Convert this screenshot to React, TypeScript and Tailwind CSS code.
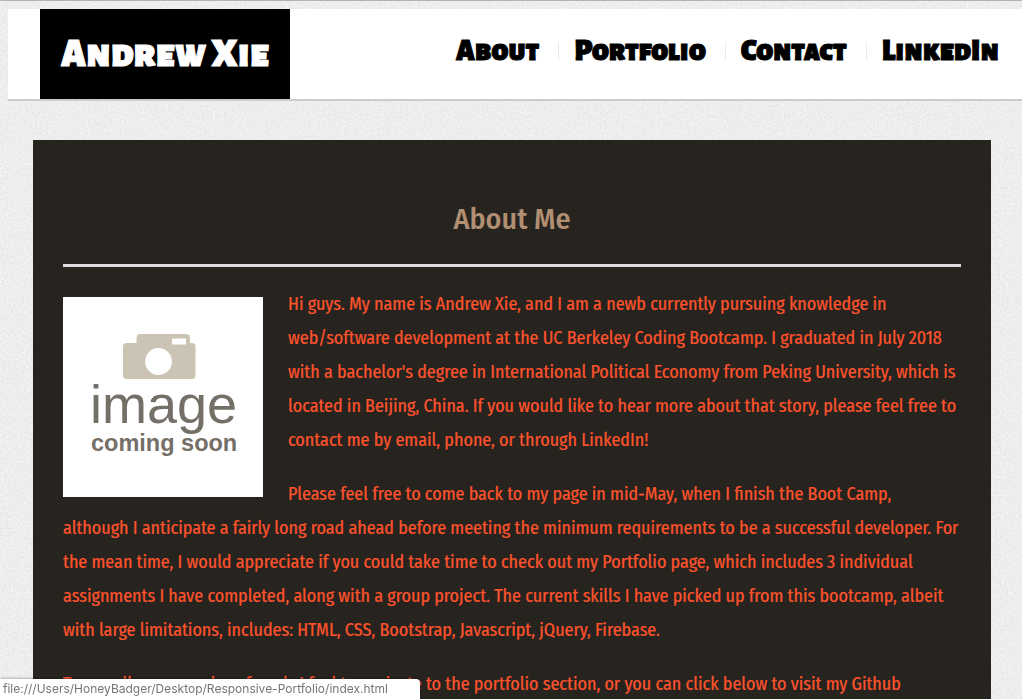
const navItems = [
  { label: "About", href: "#about" },
  { label: "Portfolio", href: "#portfolio" },
  { label: "Contact", href: "#contact" },
  { label: "LinkedIn", href: "#linkedin" },
];

function PaperTexture() {
  return (
    <svg aria-hidden="true" className="absolute inset-0 h-full w-full">
      <filter id="paper" x="0" y="0" width="100%" height="100%" colorInterpolationFilters="sRGB">
        <feTurbulence type="fractalNoise" baseFrequency="0.45" numOctaves="4" seed="8" />
        <feColorMatrix
          type="matrix"
          values="0.08 0.04 0 0 0.87  0.08 0.04 0 0 0.87  0.08 0.04 0 0 0.87  0 0 0 0 1"
        />
      </filter>
      <rect width="100%" height="100%" filter="url(#paper)" />
    </svg>
  );
}

function ComingSoon() {
  return (
    <svg
      role="img"
      aria-label="image coming soon"
      viewBox="0 0 200 200"
      className="float-left mr-[25px] mb-2 h-[200px] w-[200px] bg-white"
    >
      <path
        fill="#cbc4b4"
        d="M63.500 46H73.500V41a4 4 0 0 1 4-4H123a4 4 0 0 1 4 4V46H129a3.500 3.500 0 0 1 3.500 3.500V78.500a3.500 3.500 0 0 1-3.500 3.500H63.500a3.500 3.500 0 0 1-3.500-3.500V49.500a3.500 3.500 0 0 1 3.500-3.500Z"
      />
      <circle cx="95.5" cy="64.500" r="13.400" fill="#fff" />
      <rect x="109" y="41.500" width="14" height="6" fill="#fff" />
      <g fill="#747067" fontFamily="Liberation Sans, Arial, sans-serif">
        <text x="27" y="126" fontSize="54">image</text>
        <text x="28" y="154" fontSize="23.500" fontWeight="700">coming soon</text>
      </g>
    </svg>
  );
}

export default function App() {
  return (
    <div className="relative h-screen overflow-hidden border-t border-[#b3b1b3] bg-[#ececec] pt-2 pl-2">
      <PaperTexture />
      <div className="relative">
        <header className="flex h-[92px] items-stretch justify-between border-b-2 border-[#cccccc] bg-white pr-[23px] pl-8 font-['Alegreya_Sans_SC','Lato',sans-serif] font-black">
          <a
            href="#home"
            className="flex w-[250px] items-center justify-center bg-black text-[40px] leading-none whitespace-nowrap text-white [-webkit-text-stroke:1px_white]"
          >
            Andrew Xie
          </a>
          <nav className="flex items-center pb-1.5">
            <ul className="flex items-center">
              {navItems.map((item) => (
                <li
                  key={item.label}
                  className="flex h-[18px] items-center border-r border-[#ebebeb] pr-[19px] pl-[15px] last:border-r-0 last:pr-0"
                >
                  <a
                    href={item.href}
                    className="text-[30px] leading-none text-black [-webkit-text-stroke:1px_black]"
                  >
                    {item.label}
                  </a>
                </li>
              ))}
            </ul>
          </nav>
        </header>

        <main className="mt-[39px] mr-[31px] ml-[25px] bg-[#272420] p-[30px] pb-0 font-['Fira_Sans_Condensed','Roboto',sans-serif]">
          <section id="about" className="flow-root">
            <h1 className="border-b-[3px] border-[#dddddd] pt-[30px] pb-[26px] text-center text-[30px] leading-[38px] font-medium text-[#b08f72]">
              About Me
            </h1>
            <div className="mt-5 text-[18px] leading-[34px] text-[#ff532c] [-webkit-text-stroke:0.200px_#ff532c]">
              <div className="pt-2.5">
                <ComingSoon />
                <p className="-mt-2.5 mb-5">
                  Hi guys. My name is Andrew Xie, and I am a newb currently pursuing knowledge in
                  web/software development at the UC Berkeley Coding Bootcamp. I graduated in July 2018
                  with a bachelor's degree in International Political Economy from Peking University,
                  which is located in Beijing, China. If you would like to hear more about that story,
                  please feel free to contact me by email, phone, or through LinkedIn!
                </p>
              </div>
              <p className="mb-5">
                Please feel free to come back to my page in mid-May, when I finish the Boot Camp,
                although I anticipate a fairly long road ahead before meeting the minimum requirements to
                be a successful developer. For the mean time, I would appreciate if you could take time
                to check out my Portfolio page, which includes 3 individual assignments I have completed,
                along with a group project. The current skills I have picked up from this bootcamp,
                albeit with large limitations, includes: HTML, CSS, Bootstrap, Javascript, jQuery,
                Firebase.
              </p>
              <p>
                To see all my examples of work, I feel to navigate to the portfolio section, or you can
                click below to visit my Github
              </p>
            </div>
          </section>
        </main>
      </div>

      <div
        role="status"
        className="fixed bottom-0 left-0 flex h-5 w-[420px] items-center rounded-tr bg-white pl-[3px] font-['Inter','Roboto',sans-serif] text-[12px] whitespace-nowrap text-[#757575] shadow-[0_0_3px_rgba(0,0,0,0.5)]"
      >
        file:///Users/HoneyBadger/Desktop/Responsive-Portfolio/index.html
      </div>
    </div>
  );
}
